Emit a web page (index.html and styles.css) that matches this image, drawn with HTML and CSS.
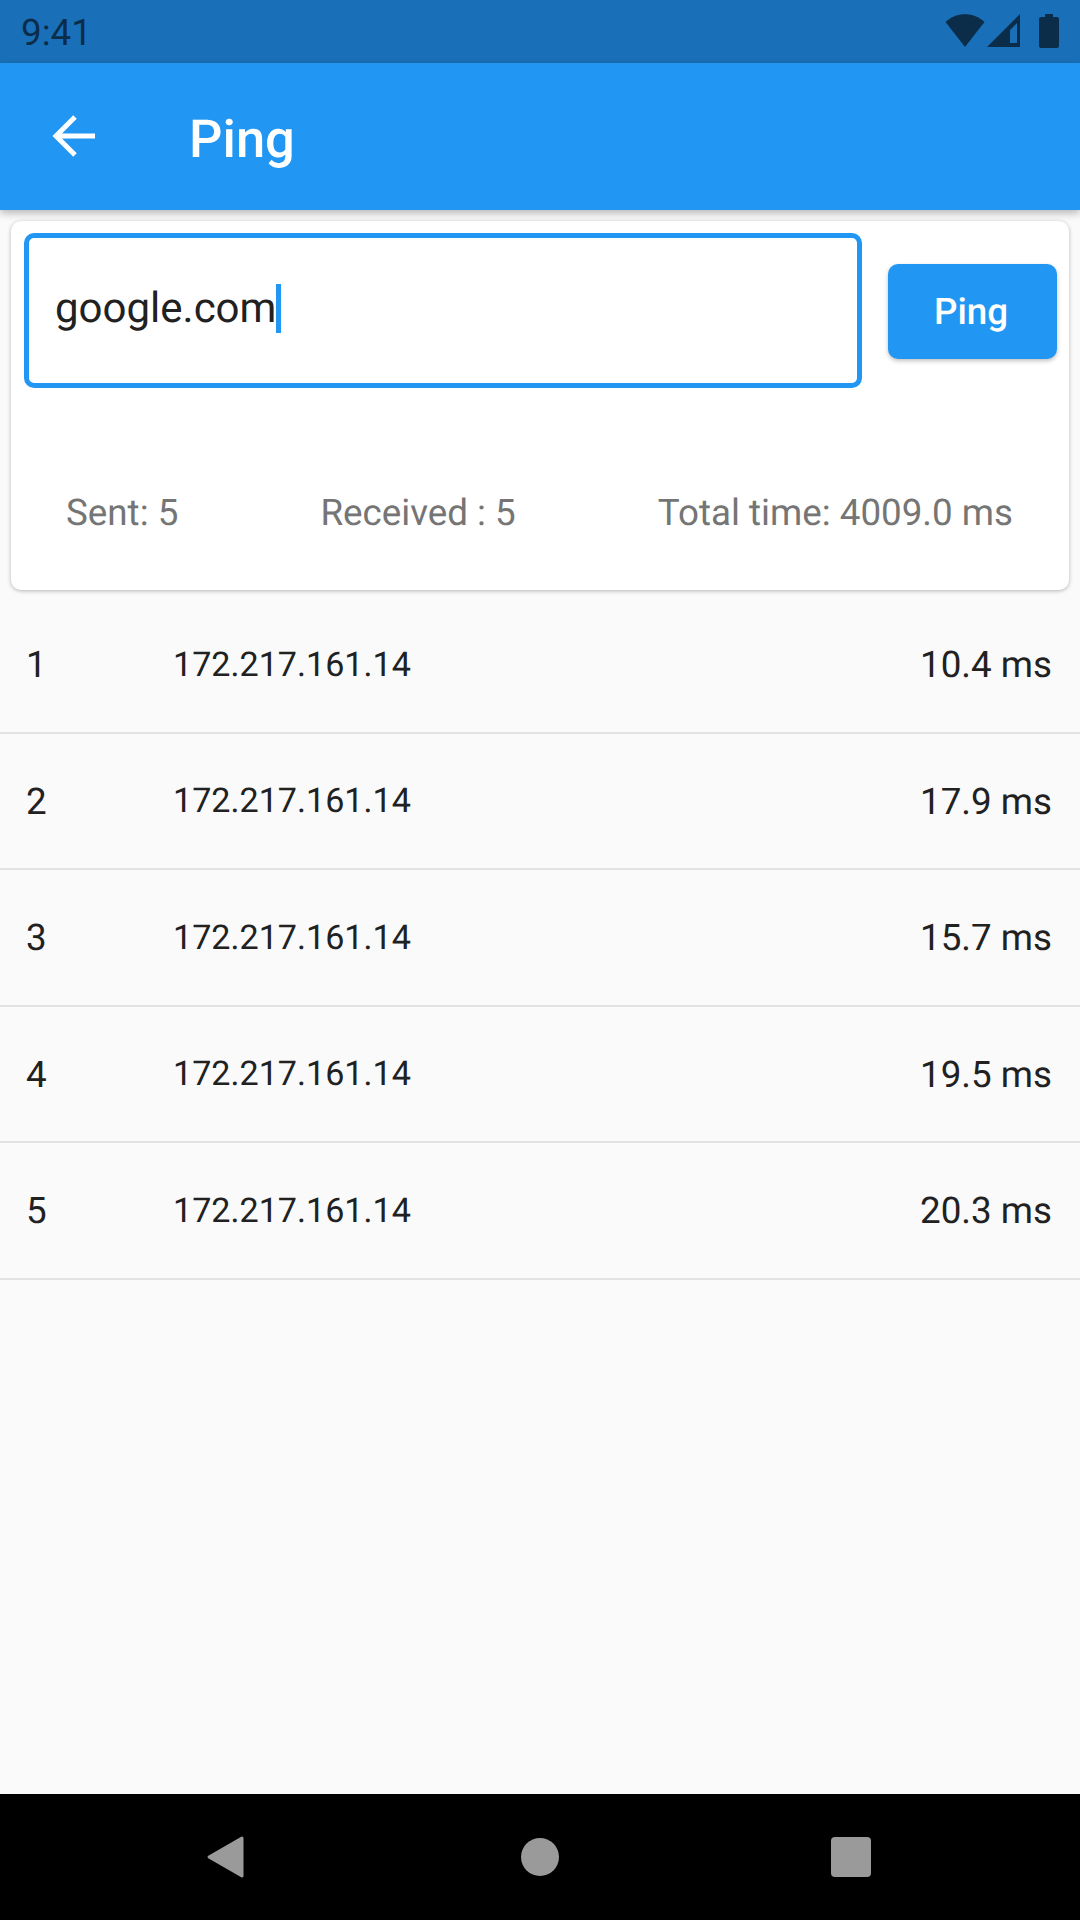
FILE: index.html
```html
<!DOCTYPE html>
<html lang="en">
<head>
<meta charset="utf-8">
<title>Ping</title>
<link rel="stylesheet" href="styles.css">
</head>
<body>
<div class="screen">
  <div class="statusbar">
    <span class="clock">9:41</span>
    <div class="status-icons">
      <svg class="ic-wifi" width="40" height="34" viewBox="0 0 40 34"><path d="M0.5 8C11 -2.500 29 -2.500 39.500 8L20 33z" fill="#0b2d4a"/></svg>
      <svg class="ic-signal" width="34" height="34" viewBox="0 0 34 34"><path fill-rule="evenodd" d="M33 0V33H0zM30 9L23 16V29H30z" fill="#0b2d4a"/></svg>
      <svg class="ic-battery" width="20" height="34" viewBox="0 0 20 34"><path d="M6 0H14V3H18Q20 3 20 5V32Q20 34 18 34H2Q0 34 0 32V5Q0 3 2 3H6z" fill="#0b2d4a"/></svg>
    </div>
  </div>
  <header class="appbar">
    <svg class="back" width="44" height="42" viewBox="0 0 44 42"><path d="M43 21H4M23 2L4 21L23 40" fill="none" stroke="#fff" stroke-width="5"/></svg>
    <h1 class="title">Ping</h1>
  </header>
  <main class="content">
    <section class="card">
      <div class="input-row">
        <div class="field"><span class="field-text">google.com</span><span class="caret"></span></div>
        <button class="ping-btn">Ping</button>
      </div>
      <div class="stats">
        <span>Sent: 5</span>
        <span>Received : 5</span>
        <span>Total time: 4009.0 ms</span>
      </div>
    </section>
    <ul class="results">
      <li class="row"><span class="seq">1</span><span class="ip">172.217.161.14</span><span class="time">10.4 ms</span></li>
      <li class="row"><span class="seq">2</span><span class="ip">172.217.161.14</span><span class="time">17.9 ms</span></li>
      <li class="row"><span class="seq">3</span><span class="ip">172.217.161.14</span><span class="time">15.7 ms</span></li>
      <li class="row"><span class="seq">4</span><span class="ip">172.217.161.14</span><span class="time">19.5 ms</span></li>
      <li class="row"><span class="seq">5</span><span class="ip">172.217.161.14</span><span class="time">20.3 ms</span></li>
    </ul>
  </main>
  <nav class="navbar">
    <svg width="38" height="44" viewBox="0 0 38 44"><path d="M36 3L3 22L36 41z" fill="#9a9a9a" stroke="#9a9a9a" stroke-width="3" stroke-linejoin="round"/></svg>
    <span class="nav-home"></span>
    <span class="nav-recent"></span>
  </nav>
</div>
</body>
</html>
```
FILE: styles.css
```css
* { box-sizing: border-box; }
html, body { margin: 0; padding: 0; }
body { font-family: Roboto, "Noto Sans", sans-serif; background: #fafafa; text-rendering: geometricPrecision; }
.screen { width: 1080px; height: 1920px; display: flex; flex-direction: column; overflow: hidden; }
.statusbar { height: 63px; flex: none; background: #1a70b8; display: flex; align-items: center; justify-content: space-between; padding: 0 21px 0 21px; }
.clock { font-size: 36.75px; line-height: 63px; color: #0b2d4a; margin-top: 2px; }
.status-icons { display: flex; align-items: center; margin-top: -1px; }
.ic-wifi { margin-right: 2px; }
.ic-signal { margin-right: 18px; }
.appbar { height: 147px; flex: none; background: #2196f3; display: flex; align-items: center; padding-left: 52px; box-shadow: 0 3px 8px rgba(0,0,0,.28); position: relative; z-index: 2; }
.back { margin-right: 93px; margin-top: -2px; }
.title { margin: 4px 0 0; font-size: 52.5px; font-weight: 500; color: #fff; }
.content { flex: 1; background: #fafafa; display: flex; flex-direction: column; }
.card { margin: 11px 11px 0; height: 369px; background: #fff; border-radius: 10px; box-shadow: 0 1px 4px rgba(0,0,0,.28); padding: 12px 12px 0 13px; display: flex; flex-direction: column; }
.input-row { display: flex; align-items: center; justify-content: space-between; }
.field { width: 838px; height: 155px; border: 5px solid #2196f3; border-radius: 10px; display: flex; align-items: center; padding-left: 26px; }
.field-text { font-size: 42px; color: #212121; margin-top: -5px; }
.caret { width: 5px; height: 49px; background: #2196f3; margin: -4px 0 0 0; }
.ping-btn { width: 169px; height: 95px; margin-top: 2px; padding: 0 3px 0 0; border: 0; border-radius: 10px; background: #2196f3; color: #fff; font: 500 36.75px Roboto, sans-serif; text-rendering: geometricPrecision; box-shadow: 0 2px 4px rgba(0,0,0,.25); }
.stats { display: flex; justify-content: space-between; padding: 0 44px 0 42px; margin-top: 103px; font-size: 36.75px; color: #757575; }
.results { list-style: none; margin: 7.4px 0 0; padding: 0; }
.row { height: 136.5px; padding: 0 28px 0 26px; display: flex; align-items: center; border-bottom: 2px solid #e2e2e2; font-size: 34.125px; color: #212121; }
.seq { width: 147px; font-size: 36.75px; }
.ip { flex: 1; }
.time { font-size: 36.75px; }
.navbar { height: 126px; flex: none; background: #000; display: flex; align-items: center; }
.navbar svg { margin-left: 206px; margin-right: 277px; }
.nav-home { width: 38px; height: 38px; border-radius: 50%; background: #9a9a9a; margin-right: 272px; }
.nav-recent { width: 40px; height: 40px; border-radius: 4px; background: #9a9a9a; }
```
